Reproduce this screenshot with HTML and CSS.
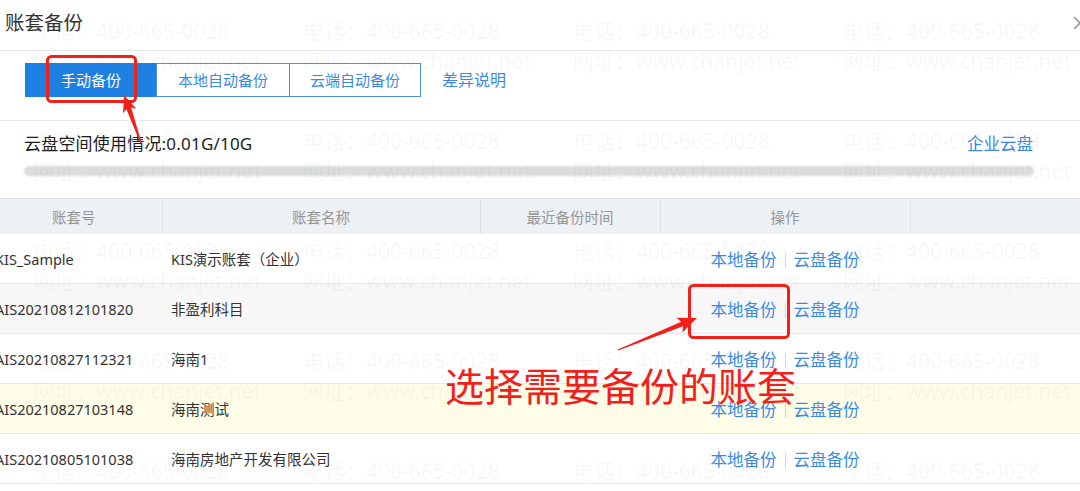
FILE: index.html
```html
<!DOCTYPE html>
<html lang="zh-CN">
<head>
    <meta charset="UTF-8">
    <title>账套备份</title>
    <link rel="stylesheet" href="styles.css">
</head>
<body>
    <div class="dialog">
        <div class="dialog-head">
            <span class="dialog-title">账套备份</span>
            <svg class="close-btn" width="14" height="14" viewBox="0 0 14 14">
                <path d="M1 1 L13 13 M13 1 L1 13" stroke="#9a9a9a" stroke-width="1.6" fill="none"/>
            </svg>
        </div>

        <div class="tabs-bar">
            <div class="tabs">
                <span class="tab active">手动备份</span>
                <span class="tab wide">本地自动备份</span>
                <span class="tab">云端自动备份</span>
            </div>
            <a class="diff-link">差异说明</a>
        </div>

        <div class="storage">
            <div class="storage-row">
                <span class="storage-text">云盘空间使用情况:0.01G/10G</span>
                <a class="link">企业云盘</a>
            </div>
            <div class="storage-bar"></div>
        </div>

        <table class="accounts">
            <colgroup>
                <col style="width:176px">
                <col style="width:318px">
                <col style="width:180px">
                <col style="width:250px">
                <col style="width:170px">
            </colgroup>
            <thead>
                <tr>
                    <th>账套号</th>
                    <th>账套名称</th>
                    <th>最近备份时间</th>
                    <th>操作</th>
                    <th class="last"></th>
                </tr>
            </thead>
            <tbody>
                <tr>
                    <td>KIS_Sample</td>
                    <td>KIS演示账套（企业）</td>
                    <td></td>
                    <td class="ops"><a class="link">本地备份</a><span class="sep"></span><a class="link">云盘备份</a></td>
                    <td></td>
                </tr>
                <tr class="hover">
                    <td>AIS20210812101820</td>
                    <td>非盈利科目</td>
                    <td></td>
                    <td class="ops"><a class="link">本地备份</a><span class="sep"></span><a class="link">云盘备份</a></td>
                    <td></td>
                </tr>
                <tr>
                    <td>AIS20210827112321</td>
                    <td>海南1</td>
                    <td></td>
                    <td class="ops"><a class="link">本地备份</a><span class="sep"></span><a class="link">云盘备份</a></td>
                    <td></td>
                </tr>
                <tr class="selected">
                    <td>AIS20210827103148</td>
                    <td>海南测试</td>
                    <td></td>
                    <td class="ops"><a class="link">本地备份</a><span class="sep"></span><a class="link">云盘备份</a></td>
                    <td></td>
                </tr>
                <tr>
                    <td>AIS20210805101038</td>
                    <td>海南房地产开发有限公司</td>
                    <td></td>
                    <td class="ops"><a class="link">本地备份</a><span class="sep"></span><a class="link">云盘备份</a></td>
                    <td></td>
                </tr>
            </tbody>
        </table>

        <!-- watermark tiles -->
        <div class="watermark">
            <div class="wm"><span>电话：400-665-0028</span><span>网址：www.chanjet.net</span></div>
            <div class="wm"><span>电话：400-665-0028</span><span>网址：www.chanjet.net</span></div>
            <div class="wm"><span>电话：400-665-0028</span><span>网址：www.chanjet.net</span></div>
            <div class="wm"><span>电话：400-665-0028</span><span>网址：www.chanjet.net</span></div>
            <div class="wm"><span>电话：400-665-0028</span><span>网址：www.chanjet.net</span></div>
            <div class="wm"><span>电话：400-665-0028</span><span>网址：www.chanjet.net</span></div>
            <div class="wm"><span>电话：400-665-0028</span><span>网址：www.chanjet.net</span></div>
            <div class="wm"><span>电话：400-665-0028</span><span>网址：www.chanjet.net</span></div>
            <div class="wm"><span>电话：400-665-0028</span><span>网址：www.chanjet.net</span></div>
            <div class="wm"><span>电话：400-665-0028</span><span>网址：www.chanjet.net</span></div>
            <div class="wm"><span>电话：400-665-0028</span><span>网址：www.chanjet.net</span></div>
            <div class="wm"><span>电话：400-665-0028</span><span>网址：www.chanjet.net</span></div>
            <div class="wm"><span>电话：400-665-0028</span><span>网址：www.chanjet.net</span></div>
            <div class="wm"><span>电话：400-665-0028</span><span>网址：www.chanjet.net</span></div>
            <div class="wm"><span>电话：400-665-0028</span><span>网址：www.chanjet.net</span></div>
            <div class="wm"><span>电话：400-665-0028</span><span>网址：www.chanjet.net</span></div>
            <div class="wm"><span>电话：400-665-0028</span><span>网址：www.chanjet.net</span></div>
            <div class="wm"><span>电话：400-665-0028</span><span>网址：www.chanjet.net</span></div>
            <div class="wm"><span>电话：400-665-0028</span><span>网址：www.chanjet.net</span></div>
            <div class="wm"><span>电话：400-665-0028</span><span>网址：www.chanjet.net</span></div>
        </div>

        <!-- red annotations -->
        <svg class="marks" width="1080" height="491" viewBox="0 0 1080 491">
            <rect x="47.5" y="56.5" width="88" height="45" rx="4" fill="none" stroke="#f2201a" stroke-width="3"/>
            <rect x="689.5" y="285.5" width="99" height="52" rx="4" fill="none" stroke="#f2201a" stroke-width="3"/>
            <polygon fill="#f2201a" points="141.6,142.8 131.1,107.4 136.3,108.7 124,95 123.1,113.3 126.3,109 140.4,143.2"/>
            <polygon fill="#f2201a" points="618.2,350.6 683.1,326.3 682.4,332.5 697,318 676.4,317.7 681.3,321.7 617.8,349.4"/>
        </svg>
        <div class="note">选择需要备份的账套</div>
    </div>
</body>
</html>
```

FILE: styles.css
```css
body {
    margin: 0;
    padding: 0;
    background-color: #fff;
    font-family: "Noto Sans", "Noto Sans CJK SC", sans-serif;
    color: #333;
}
a {
    text-decoration: none;
    cursor: pointer;
}
.dialog {
    position: relative;
    width: 1080px;
    height: 491px;
    overflow: hidden;
    background: #fff;
}
.dialog-head {
    box-sizing: border-box;
    height: 51px;
    padding: 0 0 8px 5px;
    display: flex;
    align-items: center;
    justify-content: space-between;
    border-bottom: 1px solid #e6e6e6;
}
.dialog-title {
    font-size: 19.5px;
    color: #333;
}
.close-btn {
    margin-right: -7px;
    margin-top: 4px;
}
.tabs-bar {
    box-sizing: border-box;
    height: 70px;
    padding: 12px 0 0 26px;
    display: flex;
    align-items: flex-start;
    border-bottom: 1px solid #e8e8e8;
}
.tabs {
    display: flex;
}
.tab {
    box-sizing: border-box;
    width: 132px;
    height: 34px;
    line-height: 32px;
    text-align: center;
    font-size: 15px;
    color: #3a8ae2;
    border: 1px solid #4a93e4;
    margin-left: -1px;
}
.tab.wide {
    width: 134px;
}
.tab.active {
    background-color: #1f80e4;
    border-color: #1f80e4;
    color: #fff;
}
.diff-link {
    margin-left: 21px;
    line-height: 34px;
    font-size: 16px;
    color: #3a8ae2;
}
.storage {
    box-sizing: border-box;
    height: 78px;
    padding: 11px 47px 0 24px;
    border-bottom: 1px solid #dfe4ea;
}
.storage-row {
    display: flex;
    justify-content: space-between;
    height: 24px;
    line-height: 24px;
}
.storage-text {
    font-size: 17px;
    letter-spacing: 0.2px;
    color: #1c1c1c;
}
.storage-bar {
    margin-top: 10px;
    margin-right: -1px;
    height: 10px;
    border-radius: 5px;
    background: #dcdcdc;
    filter: blur(0.8px);
}
.link {
    color: #3a8ae2;
    font-size: 16.5px;
}
.accounts {
    margin-left: -14px;
    width: 1094px;
    table-layout: fixed;
    border-collapse: collapse;
}
.accounts th {
    height: 35px;
    padding: 0;
    background-color: #edf1f5;
    color: #959595;
    font-size: 14.5px;
    font-weight: normal;
    text-align: center;
    border-right: 1px solid #dde2e8;
}
.accounts th.last {
    border-right: none;
}
.accounts td {
    height: 49px;
    padding: 0 9px;
    font-size: 14.5px;
    color: #333;
    white-space: nowrap;
    border-bottom: 1px solid #e6e8eb;
}
.accounts tr.hover td {
    background-color: #f7f7f7;
}
.accounts tr.selected td {
    background-color: #fdfde8;
}
.accounts td.ops {
    text-align: center;
}
.sep {
    display: inline-block;
    width: 1px;
    height: 15px;
    margin: 0 8px;
    background-color: #d4d4d4;
    vertical-align: -2px;
}
.watermark {
    position: absolute;
    top: 16px;
    left: 33px;
    display: grid;
    grid-template-columns: repeat(4, 270px);
    grid-auto-rows: 110px;
    pointer-events: none;
}
.wm {
    display: flex;
    flex-direction: column;
    font-size: 21px;
    line-height: 30px;
    color: rgba(0, 0, 0, 0.045);
    white-space: nowrap;
}
.marks {
    position: absolute;
    top: 0;
    left: 0;
    pointer-events: none;
}
.note {
    position: absolute;
    left: 445px;
    top: 365px;
    font-family: "Noto Sans CJK SC", sans-serif;
    font-size: 39px;
    line-height: 1;
    color: #f2201a;
    white-space: nowrap;
}
```
